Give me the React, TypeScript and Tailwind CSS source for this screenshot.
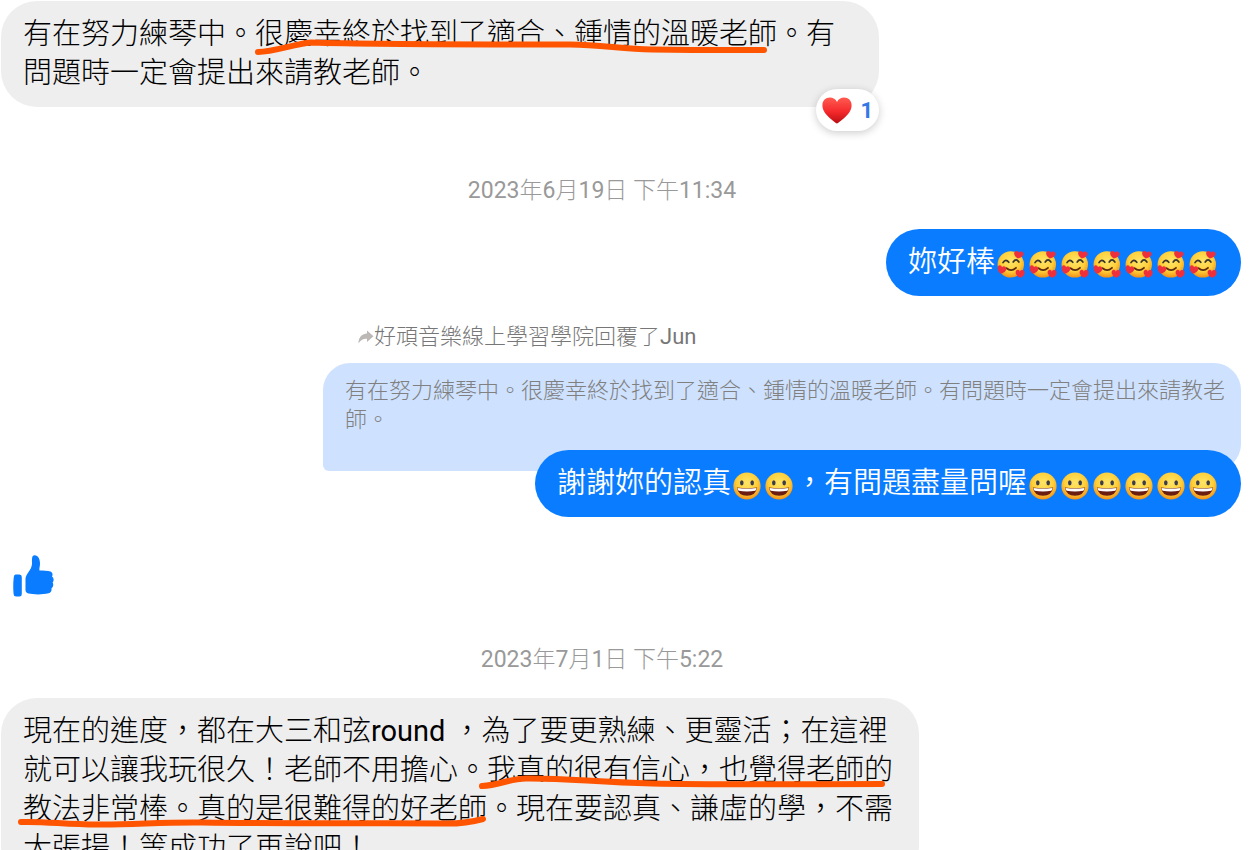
import React from 'react';

const MESSAGE_ONE = '有在努力練琴中。很慶幸終於找到了適合、鍾情的溫暖老師。有問題時一定會提出來請教老師。';

function Gradients() {
  return (
    <svg className="absolute size-0" aria-hidden="true">
      <defs>
        <radialGradient id="face" cx="0.5" cy="0.38" r="0.64">
          <stop offset="0" stopColor="#ffe566" />
          <stop offset="0.6" stopColor="#fecf3a" />
          <stop offset="1" stopColor="#f28a12" />
        </radialGradient>
        <linearGradient id="heart" x1="0" y1="0" x2="0" y2="1">
          <stop offset="0" stopColor="#ff5a50" />
          <stop offset="0.55" stopColor="#f4292b" />
          <stop offset="1" stopColor="#b90d12" />
        </linearGradient>
      </defs>
    </svg>
  );
}

function GrinEmoji() {
  return (
    <svg viewBox="0 0 28 28" className="mx-0.5 inline-block size-7 align-[-7px]" role="img" aria-label="grinning face">
      <circle cx="14" cy="14" r="13.6" fill="url(#face)" />
      <ellipse cx="8.800" cy="10.800" rx="1.800" ry="2.600" fill="#3a3d4c" />
      <ellipse cx="19.200" cy="10.800" rx="1.800" ry="2.600" fill="#3a3d4c" />
      <path d="M3.900 15.600Q14 17.200 24.100 15.600Q22.800 23.800 14 23.800Q5.200 23.800 3.900 15.600Z" fill="#6b1d14" />
      <path d="M4.500 15.900Q14 17.400 23.500 15.900Q23.200 18 22.300 18.800Q14 20.200 5.700 18.800Q4.800 18 4.500 15.900Z" fill="#fff" />
    </svg>
  );
}

function LoveEmoji() {
  return (
    <svg viewBox="0 0 28 28" className="mx-0.5 inline-block size-7 align-[-6px]" role="img" aria-label="smiling face with hearts">
      <circle cx="13.8" cy="14.4" r="13.2" fill="url(#face)" />
      <path d="M6 12.600Q8.800 8.200 11.800 12.300M16.200 12Q19 7.800 21.900 12" fill="none" stroke="#3a3430" strokeWidth="1.7" strokeLinecap="round" />
      <path d="M9.600 18.200Q14.200 22.200 19 17.800" fill="none" stroke="#5e2a12" strokeWidth="1.8" strokeLinecap="round" />
      <path d="M20.800 8.600C18 6.600 16.300 3.900 17.500 1.900C18.800 0.200 21 0.800 21.600 2.600C23 1 25.900 1.200 26.500 3.400C27 5.800 24.400 7.700 20.800 8.600Z" fill="#ee2f3c" />
      <path d="M3.600 23.600C1 21.600 -0.200 17.800 1.200 16.100C2.600 14.600 4.600 15.500 5 17.200C6.400 15.600 9 16.400 9.200 18.700C9.400 21 6.800 23 3.600 23.600Z" fill="#ee2f3c" />
      <path d="M23.200 27.800C19.800 26.400 17.900 23.400 18.900 21C19.900 19 22.200 19.500 22.800 21.400C24 19.500 27 19.700 27.600 22C28 24.400 26.300 26.800 23.200 27.800Z" fill="#ee2f3c" />
    </svg>
  );
}

function Timestamp({ children }: { children: React.ReactNode }) {
  return <time className="block pr-[38px] text-center text-[23px] leading-7 text-[#999999]">{children}</time>;
}

// Digits and Latin words are set one weight heavier than the Chinese
function Latin({ children }: { children: React.ReactNode }) {
  return <span className="font-normal">{children}</span>;
}

function Received({ className, children }: { className: string; children: React.ReactNode }) {
  return (
    <div className={`relative max-w-full rounded-[36px] bg-[#eeeeee] px-[22px] py-3.5 text-[29px] leading-[39px] text-black ${className}`}>
      {children}
    </div>
  );
}

function Sent({ className, children }: { className: string; children: React.ReactNode }) {
  return (
    <div className={`relative w-fit max-w-full self-end rounded-[34px] bg-[#0a7cff] px-[22px] py-3.5 text-[29px] leading-[39px] font-[350] text-white ${className}`}>
      {children}
    </div>
  );
}

// Hand-drawn highlighter stroke laid over a bubble
function Marker({ paths }: { paths: string[] }) {
  return (
    <svg className="pointer-events-none absolute inset-0 size-full" fill="none" stroke="#ff5500" strokeWidth="6" strokeLinecap="round" strokeLinejoin="round" aria-hidden="true">
      {paths.map((d) => (
        <path key={d} d={d} />
      ))}
    </svg>
  );
}

export default function App() {
  return (
    <main className="flex h-screen flex-col overflow-hidden bg-white pt-px pr-[9px] pl-px font-[Roboto,'Noto_Sans_CJK_TC',sans-serif] font-light" lang="zh-Hant">
      <Gradients />

      <Received className="w-[878px] shrink-0">
        <p>{MESSAGE_ONE}</p>
        <Marker paths={['M257 51C273 51 293 43 310 41.500C361 43 421 43.500 569 43.500C601 44 621 48 651 48.500C691 49 711 49 763 49']} />
        <button className="absolute right-0 -bottom-6 flex h-[42px] items-center gap-2 rounded-full bg-white px-1.5 text-[22px] font-bold text-[#3578e5] shadow-[0_2px_8px_rgba(0,0,0,0.2)]">
          <svg viewBox="0 0 30 27" className="h-[27px] w-[30px]" role="img" aria-label="heart">
            <path d="M15 26.600C12.500 24.600 0.400 17 0.400 8.400C0.400 3.600 3.800 0.600 7.800 0.600C11 0.600 13.800 2.400 15 5C16.200 2.400 19 0.600 22.200 0.600C26.200 0.600 29.600 3.600 29.600 8.400C29.600 17 17.500 24.600 15 26.600Z" fill="url(#heart)" />
          </svg>
          1
        </button>
      </Received>

      <div className="mt-[70px]">
        <Timestamp>
          <Latin>2023</Latin>年<Latin>6</Latin>月<Latin>19</Latin>日 下午<Latin>11:34</Latin>
        </Timestamp>
      </div>

      <Sent className="mt-6 shrink-0">
        妳好棒
        {Array.from({ length: 7 }, (_, i) => (
          <LoveEmoji key={i} />
        ))}
      </Sent>

      <section className="mt-[26px] flex w-[918px] max-w-full shrink-0 flex-col self-end">
        <div className="flex items-center pl-[35px] text-[22px] leading-[30px] text-[#777777]">
          <svg viewBox="0 0 16 14" className="h-3.5 w-4 shrink-0" fill="#bcb8b5" aria-hidden="true">
            <path d="M9 0.500L15.500 6.200L9 12V8.800C5 8.800 2.600 10 0.600 13.500C0.200 8 3.600 3.800 9 3.500Z" />
          </svg>
          <span>
            好頑音樂線上學習學院回覆了<Latin>Jun</Latin>
          </span>
        </div>
        <blockquote className="mt-[11px] rounded-[27px] rounded-bl-md bg-[#cee2ff] pt-[13px] pr-4 pb-[37px] pl-[22px] text-[22px] leading-[29px] text-[#808080]">
          {MESSAGE_ONE}
        </blockquote>
        <Sent className="-mt-[21px]">
          謝謝妳的認真
          <GrinEmoji />
          <GrinEmoji />
          ，有問題盡量問喔
          {Array.from({ length: 6 }, (_, i) => (
            <GrinEmoji key={i} />
          ))}
        </Sent>
      </section>

      <svg viewBox="0 0 42 42" className="mt-[38px] ml-3 size-[42px] shrink-0" fill="#0a7cff" role="img" aria-label="like">
        <path d="M2.500 19.500H6.500Q8.800 19.500 8.800 22V39Q8.800 41.500 6.500 41.500H3.200Q0.700 41.500 0.600 39Q-0.200 30 0.800 22Q1 19.500 2.500 19.500Z" />
        <path d="M12.500 24C12.500 19 18.500 15.500 19 9C19.100 4 18.500 0.600 21.500 0.300C25.500 0.300 27.200 5 27 9C26.900 12 26 13.500 26.500 15.500C30 15.500 35 15.500 37.500 16.500C39.800 17.500 40 20 39 21.500C41 23 41.200 26 39.600 27.500C41 29.500 40 32.500 38.500 33.200C39 36 37.500 37.800 35.500 38.300C29 40 20 39.500 15.500 38.600C13.500 38 12.500 37 12.500 35Z" />
      </svg>

      <div className="mt-[49px]">
        <Timestamp>
          <Latin>2023</Latin>年<Latin>7</Latin>月<Latin>1</Latin>日 下午<Latin>5:22</Latin>
        </Timestamp>
      </div>

      <Received className="mt-6 w-[918px] shrink-0">
        <p>
          現在的進度，都在大三和弦<Latin>round</Latin> ，為了要更熟練、更靈活；在這裡就可以讓我玩很久！老師不用擔心。我真的很有信心，也覺得老師的教法非常棒。真的是很難得的好老師。現在要認真、謙虛的學，不需大張揚！等成功了再說吧！
        </p>
        <Marker
          paths={[
            'M481 88C499 87 507 81 525 80.500C566 80 591 84 651 85.500C721 87 791 86 881 86',
            'M20 124C46 123 66 127 101 126.500C141 126 166 124 201 124.500C291 126 381 125 441 125.500C459 126 471 124 482 121',
          ]}
        />
      </Received>
    </main>
  );
}
